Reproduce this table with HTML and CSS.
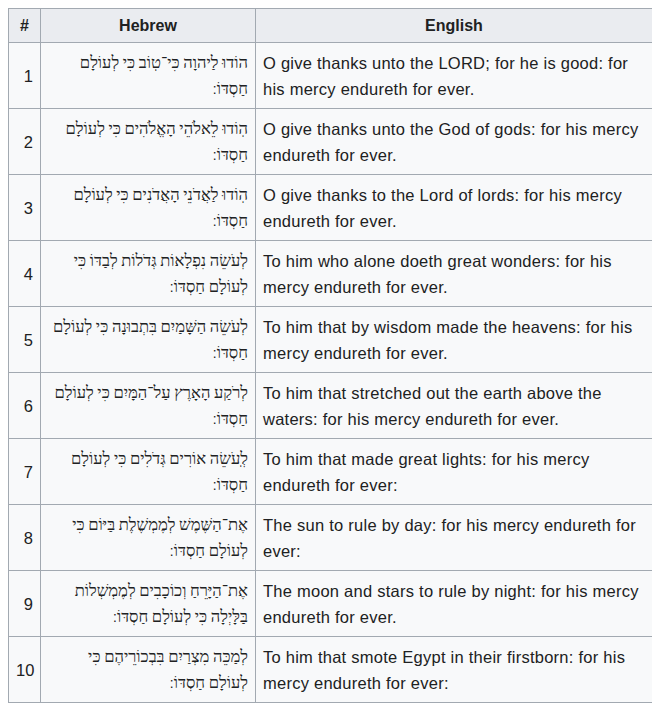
FILE: index.html
```html
<!DOCTYPE html>
<html lang="en">
<head>
<meta charset="utf-8">
<link rel="stylesheet" href="styles.css">
</head>
<body>
<table class="wikitable">
<colgroup><col class="c-num"><col class="c-heb"><col class="c-eng"></colgroup>
<thead>
<tr><th>#</th><th>Hebrew</th><th>English</th></tr>
</thead>
<tbody>
<tr><td class="num">1</td><td class="heb" lang="he" dir="rtl">הוֹדוּ לַיהוָה כִּי־טֽוֹב כִּי לְעוֹלָם חַסְדּוֹ<span class="sp">׃</span></td><td class="eng">O give thanks unto the LORD; for he is good: for his mercy endureth for ever.</td></tr>
<tr><td class="num">2</td><td class="heb" lang="he" dir="rtl">הֽוֹדוּ לֵאלֹהֵי הָאֱלֹהִים כִּי לְעוֹלָם חַסְדּוֹ<span class="sp">׃</span></td><td class="eng">O give thanks unto the God of gods: for his mercy endureth for ever.</td></tr>
<tr><td class="num">3</td><td class="heb" lang="he" dir="rtl">הֽוֹדוּ לַאֲדֹנֵי הָאֲדֹנִים כִּי לְעוֹלָם חַסְדּוֹ<span class="sp">׃</span></td><td class="eng">O give thanks to the Lord of lords: for his mercy endureth for ever.</td></tr>
<tr><td class="num">4</td><td class="heb" lang="he" dir="rtl">לְעֹשֵׂה נִפְלָאוֹת גְּדֹלוֹת לְבַדּוֹ כִּי לְעוֹלָם חַסְדּוֹ<span class="sp">׃</span></td><td class="eng">To him who alone doeth great wonders: for his mercy endureth for ever.</td></tr>
<tr><td class="num">5</td><td class="heb" lang="he" dir="rtl">לְעֹשֵׂה הַשָּׁמַיִם בִּתְבוּנָה כִּי לְעוֹלָם חַסְדּוֹ<span class="sp">׃</span></td><td class="eng">To him that by wisdom made the heavens: for his mercy endureth for ever.</td></tr>
<tr><td class="num">6</td><td class="heb" lang="he" dir="rtl">לְרֹקַע הָאָרֶץ עַל־הַמָּיִם כִּי לְעוֹלָם חַסְדּוֹ<span class="sp">׃</span></td><td class="eng">To him that stretched out the earth above the waters: for his mercy endureth for ever.</td></tr>
<tr><td class="num">7</td><td class="heb" lang="he" dir="rtl">לְֽעֹשֵׂה אוֹרִים גְּדֹלִים כִּי לְעוֹלָם חַסְדּוֹ<span class="sp">׃</span></td><td class="eng">To him that made great lights: for his mercy endureth for ever:</td></tr>
<tr><td class="num">8</td><td class="heb" lang="he" dir="rtl">אֶת־הַשֶּׁמֶשׁ לְמֶמְשֶׁלֶת בַּיּוֹם כִּי לְעוֹלָם חַסְדּוֹ<span class="sp">׃</span></td><td class="eng">The sun to rule by day: for his mercy endureth for ever:</td></tr>
<tr><td class="num">9</td><td class="heb" lang="he" dir="rtl">אֶת־הַיָּרֵחַ וְכוֹכָבִים לְמֶמְשְׁלוֹת בַּלָּיְלָה כִּי לְעוֹלָם חַסְדּוֹ<span class="sp">׃</span></td><td class="eng">The moon and stars to rule by night: for his mercy endureth for ever.</td></tr>
<tr><td class="num">10</td><td class="heb" lang="he" dir="rtl">לְמַכֵּה מִצְרַיִם בִּבְכוֹרֵיהֶם כִּי לְעוֹלָם חַסְדּוֹ<span class="sp">׃</span></td><td class="eng">To him that smote Egypt in their firstborn: for his mercy endureth for ever:</td></tr>
</tbody>
</table>
</body>
</html>
```

FILE: styles.css
```css
html, body {
  margin: 0;
  padding: 0;
  background: #ffffff;
}
body {
  padding: 8px 0 0 8px;
  font-family: "Liberation Sans", Arial, sans-serif;
  font-size: 16px;
  color: #202122;
}
.wikitable {
  border-collapse: collapse;
  table-layout: fixed;
  width: 644px;
  background: #f8f9fa;
  border: 1px solid #a2a9b1;
  color: #202122;
}
.c-num { width: 32px; }
.c-heb { width: 215px; }
.c-eng { width: 397px; }
.wikitable th,
.wikitable td {
  border: 1px solid #a2a9b1;
  padding: 6.5px 7px 6.5px 7px;
  line-height: 26px;
  vertical-align: middle;
}
.wikitable th {
  background: #eaecf0;
  font-weight: bold;
  text-align: center;
  padding-top: 3.5px;
  padding-bottom: 3.5px;
}
.wikitable td.num {
  text-align: right;
  font-size: 16.5px;
}
.wikitable td.eng {
  font-size: 16.5px;
  letter-spacing: 0.25px;
}
.wikitable td.heb {
  text-align: right;
  font-family: "Liberation Serif", "Times New Roman", serif;
  font-size: 16.5px;
  word-spacing: -0.5px;
}
.sp {
  font-family: "DejaVu Sans", sans-serif;
  font-size: 14.5px;
}
```
